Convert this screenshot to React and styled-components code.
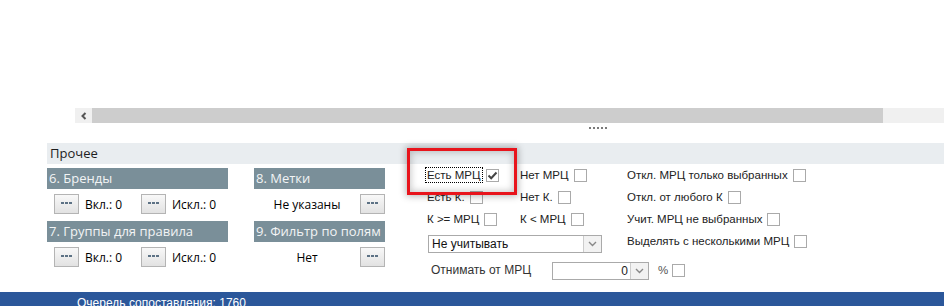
import React from "react";
import styled, { createGlobalStyle } from "styled-components";

const Global = createGlobalStyle`
  html, body { margin: 0; padding: 0; background: #fff; overflow: hidden; }
  body { width: 944px; height: 306px; }
`;

const Page = styled.div`
  width: 944px;
  height: 316px;
  display: flex;
  flex-direction: column;
  font-family: "Open Sans", "Noto Sans", sans-serif;
`;

const TopSpace = styled.div`
  height: 108px;
`;

const ScrollBar = styled.div`
  display: flex;
  height: 15px;
  margin-left: 75px;
`;

const ScrollArrow = styled.div`
  width: 17px;
  background: #f0f0f0;
  display: flex;
  align-items: center;
  justify-content: center;
`;

const ScrollTrack = styled.div`
  flex: 1;
  background: #cdcdcd;
`;

const ScrollRest = styled.div`
  width: 61px;
  background: #f0f0f0;
`;

const Grip = styled.div`
  height: 20px;
  display: flex;
  gap: 2px;
  padding: 4px 0 0 589px;
  box-sizing: border-box;
`;

const GripDot = styled.span`
  width: 2px;
  height: 2px;
  background: #7a7a7a;
`;

const Panel = styled.div`
  margin-left: 47px;
  display: flex;
  flex-direction: column;
`;

const PanelTitle = styled.div`
  height: 21px;
  line-height: 21px;
  background: #e9edf0;
  padding-left: 3px;
  font-size: 13px;
  color: #1e1e1e;
`;

const PanelBody = styled.div`
  display: flex;
`;

const Column = styled.div`
  width: ${(p) => p.$w}px;
  margin-left: ${(p) => p.$ml || 0}px;
  margin-top: 4px;
  display: flex;
  flex-direction: column;
`;

const SectionHeader = styled.div`
  height: 21px;
  line-height: 21px;
  background: #7a8f99;
  color: #f2f4f5;
  font-size: 13px;
  padding-left: 2px;
  white-space: nowrap;
`;

const Row = styled.div`
  height: 32px;
  display: flex;
  align-items: center;
  padding-left: ${(p) => p.$pl || 0}px;
  padding-bottom: 2px;
  box-sizing: border-box;
`;

const Group = styled.div`
  width: 88px;
  display: flex;
  align-items: center;
  gap: 6px;
`;

const Value = styled.span`
  font-size: 12px;
  color: #000;
  white-space: nowrap;
`;

const CenterValue = styled(Value)`
  flex: 1;
  text-align: center;
`;

const DotsButton = styled.button`
  width: 25px;
  height: 20px;
  padding: 0;
  border: 1px solid #b4b4b4;
  background: linear-gradient(#f8f8f8, #e2e2e2);
  display: flex;
  align-items: center;
  justify-content: center;
  gap: 1px;
  box-sizing: border-box;
  padding-bottom: 3px;
`;

const ButtonDot = styled.span`
  width: 3px;
  height: 2px;
  background: #5d7285;
`;

const Right = styled.div`
  margin-left: 21px;
  padding-left: 21px;
  position: relative;
  display: flex;
  flex-direction: column;
  font-family: "Liberation Sans", Arial, sans-serif;
  font-size: 11.5px;
  color: #222;
`;

const Grid = styled.div`
  display: grid;
  grid-template-columns: 93px 107px auto;
  grid-template-rows: 22px 22px 22px 26px;
`;

const Check = styled.div`
  display: flex;
  align-items: center;
  gap: 3px;
  height: 22px;
  white-space: nowrap;
`;

const CheckLabel = styled.span`
  padding: 1px 1px;
  border: 1px ${(p) => (p.$focus ? "dotted #000" : "solid transparent")};
  margin-left: -2px;
`;

const Box = styled.span`
  width: 13px;
  height: 13px;
  border: 1px solid #aaa;
  background: #fff;
  box-sizing: border-box;
  display: inline-flex;
  align-items: center;
  justify-content: center;
`;

const Select = styled.div`
  grid-column: 1 / span 2;
  margin-top: 5px;
  width: 174px;
  height: 18px;
  border: 1px solid #aaa;
  box-sizing: border-box;
  display: flex;
  align-items: center;
  margin-left: 1px;
  font-size: 12px;
`;

const SelectText = styled.span`
  flex: 1;
  padding-left: 3px;
  color: #111;
`;

const SelectArrow = styled.span`
  width: 17px;
  height: 100%;
  border-left: 1px solid #ccc;
  background: #f2f2f2;
  display: flex;
  align-items: center;
  justify-content: center;
`;

const BottomRow = styled.div`
  height: 28px;
  display: flex;
  align-items: center;
  padding-left: 4px;
`;

const BottomLabel = styled.span`
  width: 121px;
  color: #333;
  font-size: 12px;
`;

const NumberBox = styled.div`
  width: 97px;
  height: 18px;
  border: 1px solid #aaa;
  box-sizing: border-box;
  display: flex;
  align-items: center;
  margin-top: 2px;
  font-size: 12px;
`;

const NumberValue = styled.span`
  flex: 1;
  text-align: right;
  padding-right: 2px;
`;

const Percent = styled.span`
  margin-left: 9px;
  margin-right: 4px;
  color: #555;
`;

const Highlight = styled.div`
  position: absolute;
  left: 1px;
  top: -16px;
  width: 110px;
  height: 47px;
  box-sizing: border-box;
  border: 3px solid #e8141c;
  box-shadow: 0 0 7px 1px rgba(0, 0, 0, 0.3), inset 0 0 7px 1px rgba(0, 0, 0, 0.22);
  pointer-events: none;
`;

const StatusBar = styled.div`
  margin-top: auto;
  height: 24px;
  background: #2b579a;
  color: #fff;
  font-family: "Liberation Sans", Arial, sans-serif;
  font-size: 12px;
  line-height: 14px;
  padding: 4px 0 0 77px;
  box-sizing: border-box;
`;

const Chevron = () => (
  <svg width="8" height="8" viewBox="0 0 8 8">
    <polyline points="5.5,1 2.5,4 5.5,7" fill="none" stroke="#555" strokeWidth="2" />
  </svg>
);

const Down = () => (
  <svg width="9" height="6" viewBox="0 0 9 6">
    <polyline points="1,1 4.5,4.5 8,1" fill="none" stroke="#888" strokeWidth="1.4" />
  </svg>
);

const Tick = () => (
  <svg width="11" height="11" viewBox="0 0 11 11">
    <polyline points="1.5,5.5 4.2,8.2 9.5,2.5" fill="none" stroke="#444" strokeWidth="2" />
  </svg>
);

const Dots = () => (
  <DotsButton>
    <ButtonDot />
    <ButtonDot />
    <ButtonDot />
  </DotsButton>
);

const CheckItem = ({ label, checked, focus }) => (
  <Check>
    <CheckLabel $focus={focus}>{label}</CheckLabel>
    <Box>{checked && <Tick />}</Box>
  </Check>
);

export default function App() {
  return (
    <>
      <Global />
      <Page>
        <TopSpace />
        <ScrollBar>
          <ScrollArrow>
            <Chevron />
          </ScrollArrow>
          <ScrollTrack />
          <ScrollRest />
        </ScrollBar>
        <Grip>
          {[0, 1, 2, 3, 4].map((i) => (
            <GripDot key={i} />
          ))}
        </Grip>
        <Panel>
          <PanelTitle>Прочее</PanelTitle>
          <PanelBody>
            <Column $w={181}>
              <SectionHeader>6. Бренды</SectionHeader>
              <Row $pl={7}>
                <Group>
                  <Dots />
                  <Value>Вкл.: 0</Value>
                </Group>
                <Group>
                  <Dots />
                  <Value>Искл.: 0</Value>
                </Group>
              </Row>
              <SectionHeader>7. Группы для правила</SectionHeader>
              <Row $pl={7}>
                <Group>
                  <Dots />
                  <Value>Вкл.: 0</Value>
                </Group>
                <Group>
                  <Dots />
                  <Value>Искл.: 0</Value>
                </Group>
              </Row>
            </Column>
            <Column $w={131} $ml={26}>
              <SectionHeader>8. Метки</SectionHeader>
              <Row>
                <CenterValue>Не указаны</CenterValue>
                <Dots />
              </Row>
              <SectionHeader>9. Фильтр по полям</SectionHeader>
              <Row>
                <CenterValue>Нет</CenterValue>
                <Dots />
              </Row>
            </Column>
            <Right>
              <Grid>
                <CheckItem label="Есть МРЦ" checked focus />
                <CheckItem label="Нет МРЦ" />
                <CheckItem label="Откл. МРЦ только выбранных" />
                <CheckItem label="Есть К." />
                <CheckItem label="Нет К." />
                <CheckItem label="Откл. от любого К" />
                <CheckItem label="К >= МРЦ" />
                <CheckItem label="К < МРЦ" />
                <CheckItem label="Учит. МРЦ не выбранных" />
                <Select>
                  <SelectText>Не учитывать</SelectText>
                  <SelectArrow>
                    <Down />
                  </SelectArrow>
                </Select>
                <CheckItem label="Выделять с несколькими МРЦ" />
              </Grid>
              <BottomRow>
                <BottomLabel>Отнимать от МРЦ</BottomLabel>
                <NumberBox>
                  <NumberValue>0</NumberValue>
                  <SelectArrow>
                    <Down />
                  </SelectArrow>
                </NumberBox>
                <Percent>%</Percent>
                <Box />
              </BottomRow>
              <Highlight />
            </Right>
          </PanelBody>
        </Panel>
        <StatusBar>Очередь сопоставления: 1760</StatusBar>
      </Page>
    </>
  );
}
